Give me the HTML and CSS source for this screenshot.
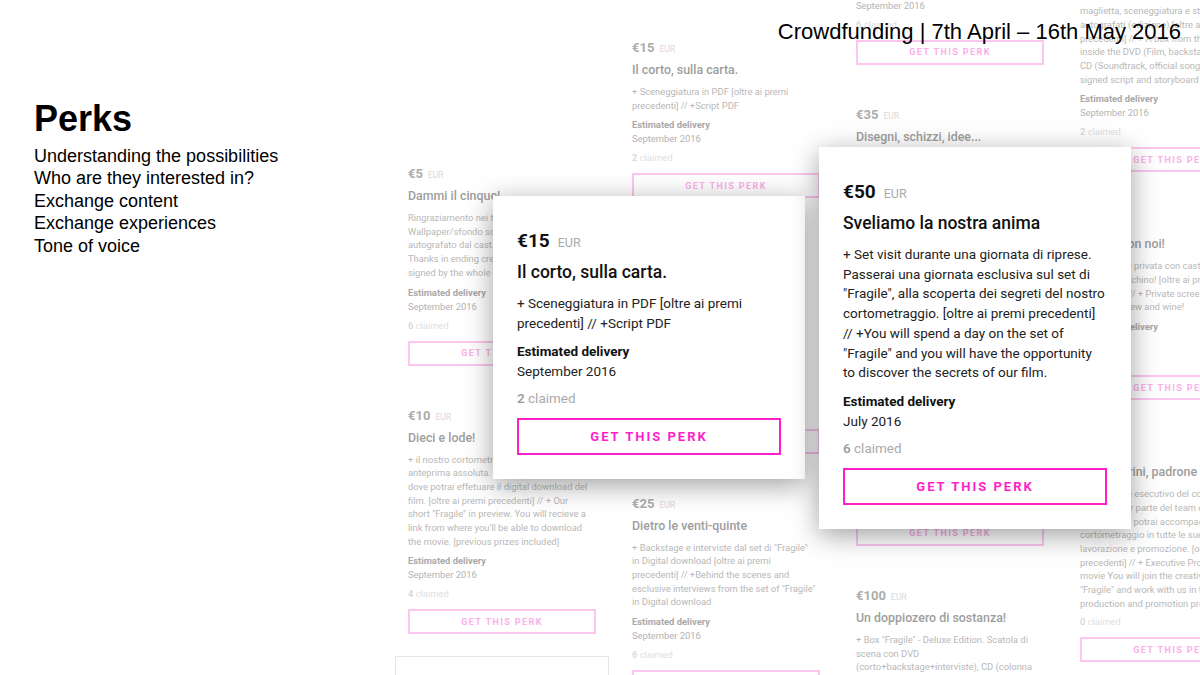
FILE: index.html
```html
<!DOCTYPE html>
<html lang="it">

<head>
    <meta charset="UTF-8" />
    <meta name="viewport" content="width=device-width, initial-scale=1.0" />
    <title>Perks</title>
    <link rel="stylesheet" href="styles.css">
</head>

<body>
    <aside class="intro">
        <h1>Perks</h1>
        <ul>
            <li>Understanding the possibilities</li>
            <li>Who are they interested in?</li>
            <li>Exchange content</li>
            <li>Exchange experiences</li>
            <li>Tone of voice</li>
        </ul>
    </aside>

    <main class="board">
        <!-- column 1 -->
        <div class="board-col board-col--a">
            <article class="perk">
                <p class="perk-price">€5<span class="perk-cur">EUR</span></p>
                <h2 class="perk-title">Dammi il cinque!</h2>
                <p class="perk-desc">Ringraziamento nei titoli di coda +<br>Wallpaper/sfondo schermo del film<br>autografato dal cast. [oltre ai premi]<br>Thanks in ending credits + Wallpaper<br>signed by the whole cast.</p>
                <p class="perk-label">Estimated delivery</p>
                <p class="perk-date">September 2016</p>
                <p class="perk-claimed"><b>6</b> claimed</p>
                <div class="perk-btn">GET THIS PERK</div>
            </article>
            <article class="perk">
                <p class="perk-price">€10<span class="perk-cur">EUR</span></p>
                <h2 class="perk-title">Dieci e lode!</h2>
                <p class="perk-desc">+ il nostro cortometraggio "Fragile" in<br>anteprima assoluta. Riceverai un link da<br>dove potrai effetuare il digital download del<br>film. [oltre ai premi precedenti] // + Our<br>short "Fragile" in preview. You will recieve a<br>link from where you'll be able to download<br>the movie. [previous prizes included]</p>
                <p class="perk-label">Estimated delivery</p>
                <p class="perk-date">September 2016</p>
                <p class="perk-claimed"><b>4</b> claimed</p>
                <div class="perk-btn">GET THIS PERK</div>
            </article>
            <article class="perk perk--hover">
                <p class="perk-price">€20<span class="perk-cur">EUR</span></p>
                <h2 class="perk-title">Ciak, si gira!</h2>
            </article>
        </div>

        <!-- column 2 -->
        <div class="board-col board-col--b">
            <article class="perk">
                <p class="perk-price">€15<span class="perk-cur">EUR</span></p>
                <h2 class="perk-title">Il corto, sulla carta.</h2>
                <p class="perk-desc">+ Sceneggiatura in PDF [oltre ai premi<br>precedenti] // +Script PDF</p>
                <p class="perk-label">Estimated delivery</p>
                <p class="perk-date">September 2016</p>
                <p class="perk-claimed"><b>2</b> claimed</p>
                <div class="perk-btn">GET THIS PERK</div>
            </article>
            <article class="perk">
                <p class="perk-price">€20<span class="perk-cur">EUR</span></p>
                <h2 class="perk-title">La colonna sonora</h2>
                <p class="perk-desc">+ Colonna sonora e canzone ufficiale in<br>Digital download [oltre ai premi<br>precedenti] // + Soundtrack and official<br>song of "Fragile" in Digital download<br>[previous prizes included] and a thank<br>you from the whole crew.</p>
                <p class="perk-label">Estimated delivery</p>
                <p class="perk-date">September 2016</p>
                <p class="perk-claimed"><b>3</b> claimed</p>
                <div class="perk-btn">GET THIS PERK</div>
            </article>
            <article class="perk">
                <p class="perk-price">€25<span class="perk-cur">EUR</span></p>
                <h2 class="perk-title">Dietro le venti-quinte</h2>
                <p class="perk-desc">+ Backstage e interviste dal set di "Fragile"<br>in Digital download [oltre ai premi<br>precedenti] // +Behind the scenes and<br>esclusive interviews from the set of "Fragile"<br>in Digital download</p>
                <p class="perk-label">Estimated delivery</p>
                <p class="perk-date">September 2016</p>
                <p class="perk-claimed"><b>6</b> claimed</p>
                <div class="perk-btn">GET THIS PERK</div>
            </article>
        </div>

        <!-- column 3 -->
        <div class="board-col board-col--c">
            <article class="perk">
                <p class="perk-price">€12<span class="perk-cur">EUR</span></p>
                <h2 class="perk-title">Fragile, da indossare</h2>
                <p class="perk-desc">+ Spilla e adesivi ufficiali del film<br>[oltre ai premi precedenti] // + Official<br>pin and stickers of the movie<br>[previous prizes included]</p>
                <p class="perk-label">Estimated delivery</p>
                <p class="perk-date">September 2016</p>
                <p class="perk-claimed"><b>6</b> claimed</p>
                <div class="perk-btn">GET THIS PERK</div>
            </article>
            <article class="perk">
                <p class="perk-price">€35<span class="perk-cur">EUR</span></p>
                <h2 class="perk-title">Disegni, schizzi, idee...</h2>
                <p class="perk-desc perk-desc--long">+ Storyboard originale stampato e autografato dal regista, con i disegni, gli schizzi e le idee che hanno dato vita al nostro cortometraggio, insieme al making of in Digital download e alla sceneggiatura in PDF [oltre ai premi precedenti] // + Original storyboard printed and signed by the director, with the drawings, sketches and ideas behind our short film, together with the making of in Digital download and the script in PDF [previous prizes included]</p>
                <p class="perk-label">Estimated delivery</p>
                <p class="perk-date">September 2016</p>
                <p class="perk-claimed"><b>5</b> claimed</p>
                <div class="perk-btn">GET THIS PERK</div>
            </article>
            <article class="perk">
                <p class="perk-price">€100<span class="perk-cur">EUR</span></p>
                <h2 class="perk-title">Un doppiozero di sostanza!</h2>
                <p class="perk-desc">+ Box "Fragile" - Deluxe Edition. Scatola di<br>scena con DVD<br>(corto+backstage+interviste), CD (colonna<br>sonora e canzone ufficiale del film)</p>
            </article>
        </div>

        <!-- column 4 -->
        <div class="board-col board-col--d">
            <article class="perk">
                <p class="perk-price">€75<span class="perk-cur">EUR</span></p>
                <h2 class="perk-title">Il box di Fragile</h2>
                <p class="perk-desc">+ Box "Fragile" - Limited Edition. Scatola<br>di scena con DVD (corto+backstage), CD<br>sonoro e canzone ufficiale del film),<br>maglietta, sceneggiatura e storyboard<br>autografati (edizione) [oltre ai premi<br>precedenti] // + A box from the film<br>inside the DVD (Film, backstage), a<br>CD (Soundtrack, official song), T-shirt,<br>signed script and storyboard</p>
                <p class="perk-label">Estimated delivery</p>
                <p class="perk-date">September 2016</p>
                <p class="perk-claimed"><b>2</b> claimed</p>
                <div class="perk-btn">GET THIS PERK</div>
            </article>
            <article class="perk">
                <p class="perk-price">€150<span class="perk-cur">EUR</span></p>
                <h2 class="perk-title">A cena con noi!</h2>
                <p class="perk-desc">+ Proiezione privata con cast,<br>troupe e secchino! [oltre ai premi<br>precedenti] // + Private screening<br>with cast, crew and wine!</p>
                <p class="perk-label">Estimated delivery</p>
                <p class="perk-date">July 2016</p>
                <p class="perk-claimed"><b>1</b> claimed</p>
                <div class="perk-btn">GET THIS PERK</div>
            </article>
            <article class="perk">
                <p class="perk-price">€500<span class="perk-cur">EUR</span></p>
                <h2 class="perk-title">Produttorini, padrone di casa</h2>
                <p class="perk-desc">+ Produttore esecutivo del corto.<br>Entrerai a far parte del team creativo<br>di "Fragile" e potrai accompagnare il<br>cortometraggio in tutte le sue fasi di<br>lavorazione e promozione. [oltre ai premi<br>precedenti] // + Executive Producer of the<br>movie You will join the creative team of<br>"Fragile" and work with us in the<br>production and promotion process.</p>
                <p class="perk-claimed"><b>0</b> claimed</p>
                <div class="perk-btn">GET THIS PERK</div>
            </article>
        </div>
    </main>

    <p class="headline">Crowdfunding | 7th April – 16th May 2016</p>

    <article class="perk perk--focus perk--focus-a">
        <p class="perk-price">€15<span class="perk-cur">EUR</span></p>
        <h2 class="perk-title">Il corto, sulla carta.</h2>
        <p class="perk-desc">+ Sceneggiatura in PDF [oltre ai premi<br>precedenti] // +Script PDF</p>
        <p class="perk-label">Estimated delivery</p>
        <p class="perk-date">September 2016</p>
        <p class="perk-claimed"><b>2</b> claimed</p>
        <div class="perk-btn">GET THIS PERK</div>
    </article>

    <article class="perk perk--focus perk--focus-b">
        <p class="perk-price">€50<span class="perk-cur">EUR</span></p>
        <h2 class="perk-title">Sveliamo la nostra anima</h2>
        <p class="perk-desc">+ Set visit durante una giornata di riprese.<br>Passerai una giornata esclusiva sul set di<br>"Fragile", alla scoperta dei segreti del nostro<br>cortometraggio. [oltre ai premi precedenti]<br>// +You will spend a day on the set of<br>"Fragile" and you will have the opportunity<br>to discover the secrets of our film.</p>
        <p class="perk-label">Estimated delivery</p>
        <p class="perk-date">July 2016</p>
        <p class="perk-claimed"><b>6</b> claimed</p>
        <div class="perk-btn">GET THIS PERK</div>
    </article>
</body>

</html>
```

FILE: styles.css
```css
* {
  box-sizing: border-box;
  margin: 0;
  padding: 0;
}

body {
  position: relative;
  display: flex;
  width: 1200px;
  height: 675px;
  overflow: hidden;
  background-color: #fff;
  font-family: Roboto, "Liberation Sans", sans-serif;
}

/* left intro */
.intro {
  flex: 0 0 395px;
  padding: 99px 0 0 34px;
  font-family: "Liberation Sans", Arial, sans-serif;
  color: #000;
}

.intro h1 {
  font-size: 36px;
  line-height: 40px;
  font-weight: bold;
}

.intro ul {
  list-style: none;
  margin-top: 6px;
  font-size: 18px;
  line-height: 22.4px;
}

.headline {
  position: absolute;
  top: 18px;
  right: 19px;
  font-family: "Liberation Sans", Arial, sans-serif;
  font-size: 22px;
  line-height: 28px;
  color: #000;
}

/* faded board of perks */
.board {
  display: grid;
  grid-template-columns: repeat(4, 214px);
  column-gap: 10px;
  align-items: start;
}

.board-col {
  display: flex;
  flex-direction: column;
  gap: 4px;
}

.board-col--a {
  margin-top: 146px;
}

.board-col--b {
  margin-top: 20px;
}

.board-col--c {
  margin-top: -141px;
}

.board-col--d {
  margin-top: -102px;
}

.perk {
  border: 1px solid transparent;
  padding: 17px 12px;
  white-space: nowrap;
}

.perk--hover {
  border-color: #e6e6e6;
}

.perk-price {
  font-size: 13px;
  line-height: 20px;
  font-weight: bold;
  color: #acacac;
}

.perk-cur {
  margin-left: 5px;
  font-size: 8.5px;
  font-weight: normal;
  color: #d8d8d8;
}

.perk-title {
  margin-bottom: 4px;
  font-size: 12.4px;
  line-height: 22px;
  font-weight: 500;
  color: #9e9e9e;
}

.perk-desc {
  font-size: 9.4px;
  line-height: 13.7px;
  color: #b8b8b8;
}

.perk-desc--long {
  height: 308px;
  overflow: hidden;
  white-space: normal;
}

.perk-label {
  margin-top: 6px;
  font-size: 9.4px;
  line-height: 14px;
  font-weight: bold;
  color: #a9a9a9;
}

.perk-date {
  font-size: 9.4px;
  line-height: 14px;
  color: #b3b3b3;
}

.perk-claimed {
  margin-top: 5px;
  font-size: 9.4px;
  line-height: 14px;
  color: #e0e0e0;
}

.perk-claimed b {
  font-weight: 500;
  color: #d6d6d6;
}

.perk-btn {
  display: flex;
  align-items: center;
  justify-content: center;
  height: 25px;
  margin-top: 8px;
  border: 2px solid #fcc6ef;
  font-size: 9px;
  font-weight: bold;
  letter-spacing: 1.4px;
  color: #fbaee9;
}

/* highlighted perks on top */
.perk--focus {
  position: absolute;
  width: 312px;
  padding: 31px 24px 24px;
  border: none;
  background-color: #fff;
  box-shadow: 0 6px 26px rgba(0, 0, 0, 0.38);
}

.perk--focus-a {
  left: 493px;
  top: 196px;
}

.perk--focus-b {
  left: 819px;
  top: 147px;
}

.perk--focus .perk-price {
  font-size: 19px;
  line-height: 28px;
  color: #111;
}

.perk--focus .perk-cur {
  margin-left: 8px;
  font-size: 12.5px;
  color: #aaa;
}

.perk--focus .perk-title {
  margin-bottom: 7px;
  font-size: 17.5px;
  line-height: 30px;
  color: #111;
}

.perk--focus .perk-desc {
  font-size: 13.5px;
  line-height: 19.7px;
  color: #222;
}

.perk--focus .perk-label {
  margin-top: 8px;
  font-size: 13.5px;
  line-height: 20px;
  color: #111;
}

.perk--focus .perk-date {
  font-size: 13.5px;
  line-height: 20px;
  color: #222;
}

.perk--focus .perk-claimed {
  margin-top: 7px;
  font-size: 13.5px;
  line-height: 20px;
  color: #aaa;
}

.perk--focus .perk-claimed b {
  color: #999;
}

.perk--focus .perk-btn {
  height: 37px;
  margin-top: 10px;
  border-color: #ff1ec8;
  font-size: 13px;
  letter-spacing: 2px;
  color: #ff1ec8;
}
```
